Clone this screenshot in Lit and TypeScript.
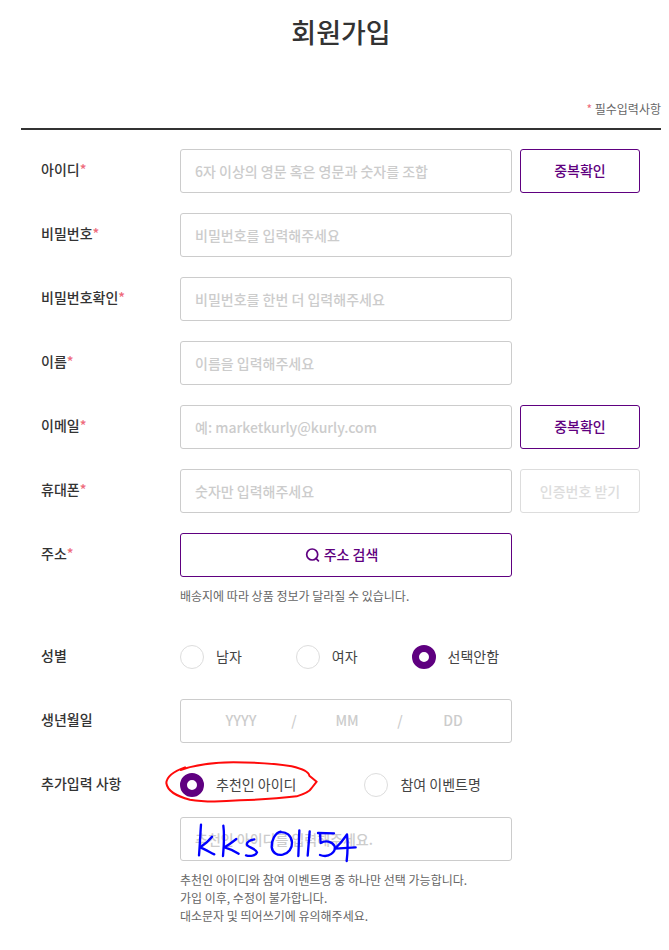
import { LitElement, html, css, svg, nothing } from "lit";
import { customElement, state } from "lit/decorators.js";

type Field = {
  id: string;
  label: string;
  placeholder: string;
  type?: string;
  action?: string;
  disabled?: boolean;
};

const FIELDS: Field[] = [
  { id: "userid", label: "아이디", placeholder: "6자 이상의 영문 혹은 영문과 숫자를 조합", action: "중복확인" },
  { id: "password", label: "비밀번호", placeholder: "비밀번호를 입력해주세요", type: "password" },
  { id: "confirm", label: "비밀번호확인", placeholder: "비밀번호를 한번 더 입력해주세요", type: "password" },
  { id: "name", label: "이름", placeholder: "이름을 입력해주세요" },
  { id: "email", label: "이메일", placeholder: "예: marketkurly@kurly.com", type: "email", action: "중복확인" },
  { id: "phone", label: "휴대폰", placeholder: "숫자만 입력해주세요", type: "tel", action: "인증번호 받기", disabled: true },
];

const INK = [
  "M123 209 C121 235 120 265 117 301",
  "M156 245 C146 258 134 268 121 277 C134 283 149 291 163 298",
  "M190 212 C194 240 192 270 189 303",
  "M229 252 C217 262 206 269 194 277 C208 281 223 288 236 296",
  "M283 253 C270 255 258 262 261 270 C268 278 288 282 291 292 C288 302 270 305 258 301",
  "M362 230 C345 234 334 256 335 276 C337 294 352 302 368 299 C386 295 397 280 396 262 C394 242 380 229 358 232",
  "M418 226 L415 303",
  "M449 229 L443 302",
  "M474 234 L522 235",
  "M480 236 L482 264 C496 256 516 258 524 274 C528 290 508 310 480 300",
  "M560 240 C549 256 537 270 525 281 L587 277",
  "M561 238 C564 265 563 292 560 318",
];

@customElement("app-root")
export class AppRoot extends LitElement {
  @state() private gender = "none";
  @state() private extra = "referrer";

  static styles = css`
    :host {
      display: block;
      background: #fff;
      color: #333;
      font-family: "Noto Sans CJK KR", "Noto Sans", sans-serif;
      font-size: 14px;
      line-height: 20px;
    }
    * { box-sizing: border-box; }
    .page { padding: 12px 8px 24px 21px; }
    .title {
      margin: 0 0 48px;
      text-align: center;
      font-size: 27px;
      line-height: 40px;
      font-weight: 500;
    }
    .required {
      margin: 0;
      padding-bottom: 10px;
      border-bottom: 2px solid #333;
      text-align: right;
      font-size: 12px;
      line-height: 18px;
      color: #666;
    }
    .star { color: #ee6a7b; }
    .form {
      display: flex;
      flex-direction: column;
      gap: 20px;
      padding: 19px 21px 0 20px;
    }
    .row {
      display: grid;
      grid-template-columns: 139px minmax(0, 1fr) 128px;
      align-items: start;
    }
    .label { padding-top: 10px; font-weight: 500; }
    .field { position: relative; display: flex; flex-direction: column; gap: 10px; }
    .side { padding-left: 8px; }
    .input, .button, .birth {
      width: 100%;
      height: 44px;
      border: 1px solid #ccc;
      border-radius: 3px;
      background: #fff;
      font: inherit;
      color: #333;
    }
    .input { padding: 0 14px; font-weight: 500; outline: none; }
    .input::placeholder, .part::placeholder { color: #ccc; opacity: 1; }
    .button {
      display: flex;
      align-items: center;
      justify-content: center;
      gap: 4px;
      padding: 0 0 2px;
      border-color: #5f0080;
      color: #5f0080;
      font-weight: 500;
      cursor: pointer;
    }
    .button:disabled { padding: 0; border-color: #ddd; color: #ddd; cursor: default; }
    .search { padding-right: 9px; }
    .icon { width: 15px; height: 15px; }
    .help { margin: 0; font-size: 12px; line-height: 18px; color: #666; }
    .spaced { padding-bottom: 10px; }
    .radios { display: flex; align-items: center; height: 44px; gap: 54px; white-space: nowrap; color: #444; }
    .wide { gap: 68px; }
    .choice { display: flex; align-items: center; gap: 12px; cursor: pointer; }
    .caption { padding-bottom: 2px; }
    .radio {
      appearance: none;
      width: 24px;
      height: 24px;
      margin: 0;
      border: 1px solid #ddd;
      border-radius: 50%;
      background: #fff;
    }
    .radio:checked { border: 7px solid #5f0080; }
    .birth { display: flex; align-items: center; padding: 0 8px 2px 10px; color: #ccc; font-weight: 500; }
    .part {
      flex: 1;
      min-width: 0;
      border: 0;
      padding: 0;
      outline: none;
      background: none;
      text-align: center;
      font: inherit;
      color: #333;
    }
    .slash { width: 6px; text-align: center; }
    .ink {
      position: absolute;
      left: -20px;
      top: -8px;
      width: 220px;
      height: 115px;
      pointer-events: none;
      fill: none;
      stroke-linecap: round;
      stroke-linejoin: round;
    }
  `;

  private star() {
    return html`<span class="star">*</span>`;
  }

  private field(f: Field) {
    return html`<div class="row">
      <label class="label" for=${f.id}>${f.label}${this.star()}</label>
      <div class="field">
        <input class="input" id=${f.id} type=${f.type ?? "text"} placeholder=${f.placeholder} />
      </div>
      ${f.action
        ? html`<div class="side"><button class="button" type="button" ?disabled=${f.disabled ?? false}>${f.action}</button></div>`
        : nothing}
    </div>`;
  }

  private radio(group: "gender" | "extra", value: string, text: string) {
    return html`<label class="choice">
      <input class="radio" type="radio" name=${group} value=${value}
        .checked=${this[group] === value} @change=${() => { this[group] = value; }} />
      <span class="caption">${text}</span>
    </label>`;
  }

  render() {
    return html`<main class="page">
      <h1 class="title">회원가입</h1>
      <p class="required">${this.star()} 필수입력사항</p>
      <form class="form">
        ${FIELDS.map((f) => this.field(f))}
        <div class="row">
          <label class="label" for="address">주소${this.star()}</label>
          <div class="field">
            <button class="button search" id="address" type="button">
              <svg class="icon" viewBox="0 0 15 15" fill="none" stroke="#5f0080" stroke-width="1.7" stroke-linecap="round" aria-hidden="true">
                <circle cx="7.2" cy="7.5" r="5.5" /><path d="M11 11.4 L13.4 13.8" />
              </svg>
              <span>주소 검색</span>
            </button>
            <p class="help spaced">배송지에 따라 상품 정보가 달라질 수 있습니다.</p>
          </div>
        </div>
        <div class="row">
          <span class="label" id="gender-label">성별</span>
          <div class="radios" role="radiogroup" aria-labelledby="gender-label">
            ${this.radio("gender", "male", "남자")}
            ${this.radio("gender", "female", "여자")}
            ${this.radio("gender", "none", "선택안함")}
          </div>
        </div>
        <div class="row">
          <label class="label" for="year">생년월일</label>
          <div class="birth">
            <input class="part" id="year" placeholder="YYYY" />
            <span class="slash">/</span>
            <input class="part" aria-label="월" placeholder="MM" />
            <span class="slash">/</span>
            <input class="part" aria-label="일" placeholder="DD" />
          </div>
        </div>
        <div class="row">
          <span class="label" id="extra-label">추가입력 사항</span>
          <div class="field">
            <div class="radios wide" role="radiogroup" aria-labelledby="extra-label">
              ${this.radio("extra", "referrer", "추천인 아이디")}
              ${this.radio("extra", "event", "참여 이벤트명")}
            </div>
            <input class="input" aria-labelledby="extra-label" placeholder="추천인 아이디를 입력해주세요." />
            <p class="help">추천인 아이디와 참여 이벤트명 중 하나만 선택 가능합니다.<br />가입 이후, 수정이 불가합니다.<br />대소문자 및 띄어쓰기에 유의해주세요.</p>
            <svg class="ink" viewBox="0 0 660 345" role="img" aria-label="kks01154">
              <path stroke="#ff0a0a" stroke-width="6" d="M75 37 C44 48 20 64 19 84 C22 106 50 124 90 134 C130 141 175 141 240 136 C310 134 370 129 410 124 C430 118 450 108 455 99 L470 80 L448 62 C446 49 425 41 395 34 C340 25 280 22 220 22 C160 22 100 32 62 45" />
              ${INK.map((d) => svg`<path stroke="#0000ff" stroke-width="7" d=${d} />`)}
            </svg>
          </div>
        </div>
      </form>
    </main>`;
  }
}
